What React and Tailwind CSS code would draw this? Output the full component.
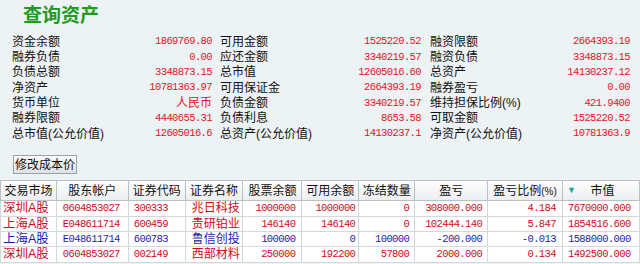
const info = [
  [['资金余额', '1869769.80'], ['可用金额', '1525220.52'], ['融资限额', '2664393.19']],
  [['融券负债', '0.00'], ['应还金额', '3340219.57'], ['融资负债', '3348873.15']],
  [['负债总额', '3348873.15'], ['总市值', '12605016.60'], ['总资产', '14130237.12']],
  [['净资产', '10781363.97'], ['可用保证金', '2664393.19'], ['融券盈亏', '0.00']],
  [['货币单位', '人民币'], ['负债金额', '3340219.57'], ['维持担保比例(%)', '421.9400']],
  [['融券限额', '4440655.31'], ['负债利息', '8653.58'], ['可取金额', '1525220.52']],
  [['总市值(公允价值)', '12605016.6'], ['总资产(公允价值)', '14130237.1'], ['净资产(公允价值)', '10781363.9']],
];

const rows = [
  { blue: false, market: '深圳A股', acct: '0604853027', code: '300333', name: '兆日科技', bal: '1000000', avail: '1000000', frozen: '0', pl: '308000.000', ratio: '4.184', value: '7670000.000' },
  { blue: false, market: '上海A股', acct: 'E048611714', code: '600459', name: '贵研铂业', bal: '146140', avail: '146140', frozen: '0', pl: '102444.140', ratio: '5.847', value: '1854516.600' },
  { blue: true, market: '上海A股', acct: 'E048611714', code: '600783', name: '鲁信创投', bal: '100000', avail: '0', frozen: '100000', pl: '-200.000', ratio: '-0.013', value: '1588000.000' },
  { blue: false, market: '深圳A股', acct: '0604853027', code: '002149', name: '西部材料', bal: '250000', avail: '192200', frozen: '57800', pl: '2000.000', ratio: '0.134', value: '1492500.000' },
];

const cjk = { fontFamily: '"Liberation Sans", "Noto Sans CJK SC", sans-serif' };
const mono = { fontFamily: '"Liberation Mono", "Noto Sans CJK SC", monospace' };

// 数字统一用等宽字体
const num = 'text-[10.5px] tracking-[-0.6px]';

function Group({ label, value, w }) {
  const isText = value === '人民币';
  return (
    <div className={`flex items-center justify-between ${w}`}>
      <span className="text-[12px] text-[#111]">{label}</span>
      <span
        className={isText ? 'text-[12px] text-[#e3141f]' : `${num} text-[#e3141f]`}
        style={isText ? cjk : mono}
      >
        {value}
      </span>
    </div>
  );
}

export default function App() {
  return (
    <div className="w-[640px] h-[264px] overflow-hidden bg-[#edf2f5]" style={cjk}>
      {/* 标题 */}
      <div className="h-[34px] pl-[23px] pt-[4px] text-[19px] font-bold leading-[24px] text-[#249a22]">
        查询资产
      </div>

      {/* 资产信息 */}
      <div className="flex flex-col">
        {info.map((r, i) => (
          <div key={i} className="flex h-[15.33px] items-center pl-[12px] leading-none">
            <Group label={r[0][0]} value={r[0][1]} w="w-[200px]" />
            <div className="w-[8px]" />
            <Group label={r[1][0]} value={r[1][1]} w="w-[201px]" />
            <div className="w-[9px]" />
            <Group label={r[2][0]} value={r[2][1]} w="w-[200px]" />
          </div>
        ))}
      </div>

      {/* 按钮 */}
      <div className="pl-[13px] pt-[14px]">
        <button className="flex h-[19px] w-[64px] items-center justify-center border border-[#9aa3ab] bg-gradient-to-b from-[#f8f9fa] to-[#dde2e6] text-[12px] leading-none text-[#111]">
          修改成本价
        </button>
      </div>

      {/* 持仓表格 */}
      <table className="mt-[6px] table-fixed border-collapse text-[12px] leading-none">
        <colgroup>
          <col className="w-[56px]" />
          <col className="w-[72px]" />
          <col className="w-[57px]" />
          <col className="w-[58px]" />
          <col className="w-[59px]" />
          <col className="w-[57px]" />
          <col className="w-[56px]" />
          <col className="w-[73px]" />
          <col className="w-[75px]" />
          <col className="w-[77px]" />
        </colgroup>
        <thead>
          <tr className="h-[20px] bg-gradient-to-b from-[#fdfdfd] to-[#ebedef] text-[#111]">
            {['交易市场', '股东帐户', '证券代码', '证券名称', '股票余额', '可用余额', '冻结数量', '盈亏'].map((h) => (
              <th key={h} className="border border-[#b9c0c6] px-0 text-center font-normal">{h}</th>
            ))}
            <th className="border border-[#b9c0c6] text-center font-normal">
              盈亏比例<span className="text-[10px]">(%)</span>
            </th>
            <th className="border border-[#b9c0c6] font-normal">
              <div className="flex items-center pl-[4px]">
                <span className="text-[9px] text-[#1aa3a8]">▼</span>
                <span className="flex-1 pr-[10px] text-center">市值</span>
              </div>
            </th>
          </tr>
        </thead>
        <tbody>
          {rows.map((r, i) => {
            const c = r.blue ? 'text-[#1c1ca8]' : 'text-[#cf0a1c]';
            return (
              <tr key={i} className={`h-[15.33px] bg-white ${c}`}>
                <td className="border border-[#d3d8dc] pl-[2px] text-[12.5px]">{r.market}</td>
                <td className={`border border-[#d3d8dc] pl-[6px] ${num}`} style={mono}>{r.acct}</td>
                <td className={`border border-[#d3d8dc] pl-[5px] ${num}`} style={mono}>{r.code}</td>
                <td className="border border-[#d3d8dc] pl-[6px] text-[12px]">{r.name}</td>
                <td className={`border border-[#d3d8dc] pr-[6px] text-right ${num}`} style={mono}>{r.bal}</td>
                <td className={`border border-[#d3d8dc] pr-[3px] text-right ${num}`} style={mono}>{r.avail}</td>
                <td className={`border border-[#d3d8dc] pr-[5px] text-right ${num}`} style={mono}>{r.frozen}</td>
                <td className={`border border-[#d3d8dc] pr-[5px] text-right ${num}`} style={mono}>{r.pl}</td>
                <td className={`border border-[#d3d8dc] pr-[6px] text-right ${num}`} style={mono}>{r.ratio}</td>
                <td className={`border border-[#d3d8dc] pl-[5px] ${num}`} style={mono}>{r.value}</td>
              </tr>
            );
          })}
        </tbody>
      </table>
    </div>
  );
}
